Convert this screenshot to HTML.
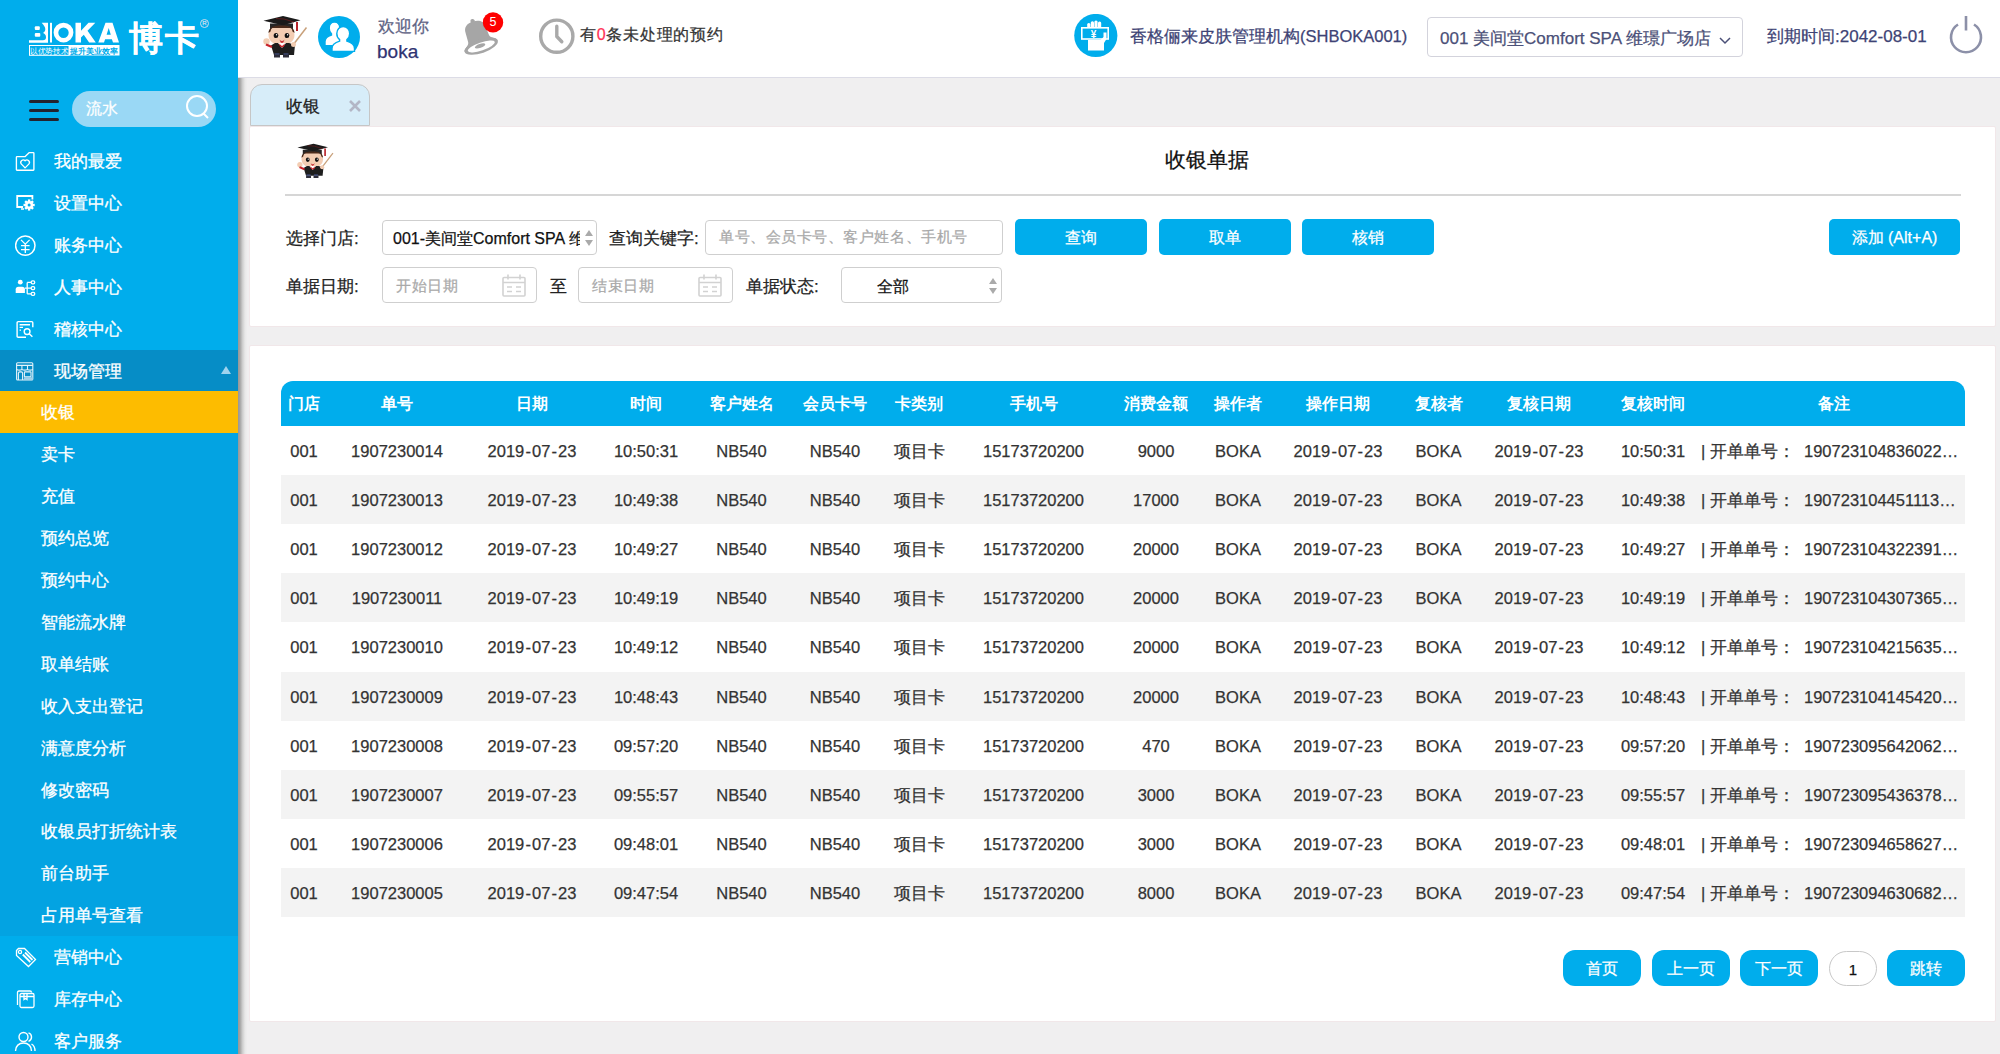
<!DOCTYPE html>
<html><head><meta charset="utf-8">
<style>
*{margin:0;padding:0;box-sizing:border-box}
html,body{width:2000px;height:1054px;overflow:hidden;background:#f0eff0;font-family:"Liberation Sans",sans-serif;color:#222;-webkit-text-stroke-width:.25px}
.abs{position:absolute}
#side{position:absolute;left:0;top:0;width:238px;height:1054px;background:#00adec}
#sideshadow{position:absolute;left:238px;top:78px;width:9px;height:976px;background:linear-gradient(to right,#979797 0px,#a4a4a4 2px,#cdcdcd 4.5px,#e8e8e8 7px,#efeeef 9px)}
#hdr{position:absolute;left:238px;top:0;width:1762px;height:78px;background:#fff;border-bottom:1px solid #dcdce6}
.mi{position:absolute;left:0;width:238px;height:42px;color:#fff;font-size:17px;line-height:44px;-webkit-text-stroke:.3px #fff}
.mi .t{position:absolute;left:54px;top:0}
.sub .t{left:41px}
.mi svg{position:absolute;left:15px;top:11px}
.panel{position:absolute;background:#fff;border:1px solid #f1e7e9;border-radius:2px}
.lbl{position:absolute;font-size:17px;color:#222;line-height:24px}
.inp{position:absolute;border:1px solid #cfcfcf;border-radius:4px;background:#fff;font-size:15px;line-height:34px}
.btn{position:absolute;background:#00adec;color:#fff;border-radius:5px;font-size:16px;text-align:center;line-height:38.5px;height:36px}
table{border-collapse:collapse;position:absolute;left:281px;top:381px;width:1684px;table-layout:fixed}
th{background:#00adec;color:#fff;font-weight:bold;font-size:15px;height:45px;text-align:center;white-space:nowrap}
td{font-size:16px;height:49px;text-align:center;white-space:nowrap;color:#222}
tr:nth-child(even) td{background:#f3f3f3}
.pbtn{position:absolute;top:950px;height:36px;background:#00adec;color:#fff;border-radius:12px;font-size:16px;text-align:center;line-height:38px;width:78px}
.th{-webkit-text-stroke-width:0;position:absolute;top:381px;width:120px;height:45px;line-height:45px;text-align:center;color:#fff;font-weight:bold;font-size:15.8px;white-space:nowrap}
.td{position:absolute;width:140px;height:49px;line-height:51px;text-align:center;color:#333;font-size:16.5px;white-space:nowrap}
.tdl{height:49px;line-height:51px;color:#333;font-size:16.5px;white-space:nowrap}
.hy{padding:0 1.1px}
</style></head><body>
<svg width="0" height="0" style="position:absolute"><defs><symbol id="cartoon" viewBox="0 0 48 46">
<path d="M31 31L44.5 13.5" stroke="#c8a07a" stroke-width="1.5"/>
<path d="M8 9.5v6.5h23v-6.5z" fill="#262626"/>
<path d="M1.5 6.8L21 2l17.5 4.3L21 11.2z" fill="#1a1a1a"/>
<path d="M14 4.5l8 0.5l10 3" stroke="#6a1d1d" stroke-width="0.8" fill="none"/>
<path d="M35 8v9" stroke="#b8232a" stroke-width="2"/>
<path d="M6.5 21c0-6 5-9 13-9s13 3 13 9c0 6-5 10-13 10s-13-4-13-10z" fill="#f3cdb3"/>
<path d="M6.5 19c0-5 4-7.5 13-7.5s13 2.5 13 7.5l-2 -1.5l-1 -3.5l-20 0l-1 3.5z" fill="#4a2a1a"/>
<ellipse cx="14" cy="21.5" rx="2.3" ry="2.6" fill="#111"/><ellipse cx="25" cy="21.5" rx="2.3" ry="2.6" fill="#111"/>
<circle cx="14.6" cy="20.8" r="0.7" fill="#fff"/><circle cx="25.6" cy="20.8" r="0.7" fill="#fff"/>
<path d="M17.5 25.5q2.5 3 5 0q-1 3.5-2.5 3.5t-2.5-3.5z" fill="#c8323a"/>
<path d="M9 31.5l4-2.5h14l6 2l-1 10h-20z" fill="#1e1e1e"/>
<path d="M16 29l4 5l4-5z" fill="#fff"/><path d="M17 29.5l3 2.5l3-2.5l-1 3l-2 1l-2-1z" fill="#c8232a"/>
<circle cx="4.5" cy="27.5" r="3.2" fill="#f3cdb3"/><path d="M4 30.5l6 2.5" stroke="#c8232a" stroke-width="2.4"/>
<circle cx="31.5" cy="30.5" r="2.5" fill="#f3cdb3"/>
<path d="M12 41h6v2.5h-6zM21 41h6v2.5h-6z" fill="#2d2d3a"/>
<path d="M12.5 40h5M21.5 40h5" stroke="#4a5a9a" stroke-width="1.2"/>
</symbol></defs></svg>
<div id="side">
<svg class="abs" style="left:25px;top:15px" width="100" height="45" viewBox="0 0 100 45">
<g fill="#fff">
<path d="M4 25.3h14c2 0 3-1 3-3c0-2.5-1.5-3.5-3-4.2c1.3-0.8 2.3-2 2.3-3.8c0-2-1-3.5-3.6-6.5h6.3v20h-19z"/>
<rect x="25" y="7.8" width="2" height="19.7"/>
<rect x="9.8" y="11.3" width="5" height="3.7" rx="1"/>
<rect x="9.8" y="18" width="5.5" height="3.7" rx="1"/>
<path fill-rule="evenodd" d="M38.5 7.7a9.9 9.9 0 1 1 0 19.8a9.9 9.9 0 1 1 0-19.8zM38.5 12.6a5.2 5.2 0 1 0 0 10.4a5.2 5.2 0 1 0 0-10.4z"/>
<path d="M50.5 7.8h5.5v8l7.5-8h6.8l-7.8 8l8.3 11.7h-6.7l-5.3-7.8l-2.8 2.8v5h-5.5z"/>
<path fill-rule="evenodd" d="M80.5 7.8h7l6.5 19.7h-6l-1.1-3.3h-6.8l-1.1 3.3h-5.7zM81.6 19.8h4.2l-2.1-6.8z"/>
</g>
<rect x="4.5" y="30.5" width="39.5" height="9.8" fill="none" stroke="#fff" stroke-width="1"/>
<rect x="44" y="30" width="50.5" height="10.5" fill="#fff"/>
<text x="24.2" y="38.8" font-size="8" fill="#fff" text-anchor="middle" textLength="38" lengthAdjust="spacingAndGlyphs">以优势技术</text>
<text x="69.2" y="38.8" font-size="8" fill="#00adec" text-anchor="middle" textLength="48" lengthAdjust="spacingAndGlyphs" font-weight="bold">提升美业效率</text>
</svg>
<div class="abs" style="left:129px;top:16px;color:#fff;font-weight:bold;font-size:34px;line-height:44px;letter-spacing:2px">博卡</div>
<div class="abs" style="left:200px;top:19px;width:9px;height:9px;border:1px solid #cde;border-radius:50%;font-size:6px;line-height:7px;text-align:center;color:#cde">R</div>
<div class="abs" style="left:29px;top:100px;width:30px;height:3px;background:#23232e;border-radius:2px"></div>
<div class="abs" style="left:29px;top:109px;width:30px;height:3px;background:#23232e;border-radius:2px"></div>
<div class="abs" style="left:29px;top:118px;width:30px;height:3px;background:#23232e;border-radius:2px"></div>
<div class="abs" style="left:72px;top:91px;width:144px;height:36px;border-radius:18px;background:#9ad8f5"></div>
<div class="abs" style="left:86px;top:99px;color:#fff;font-size:16px;line-height:20px">流水</div>
<svg class="abs" style="left:184px;top:94px" width="28" height="28" viewBox="0 0 28 28" fill="none" stroke="#fff" stroke-width="2"><circle cx="13" cy="12" r="10"/><path d="M19.5 19.5l4.5 4.5"/></svg>
<div class="mi" style="top:140.0px;"><svg width="22" height="22" viewBox="0 0 22 22" fill="none" stroke="#fff" stroke-width="1.35" stroke-linejoin="round"><path d="M1.4 6.2Q1.4 5.6 2 5.6H10.2L14.3 1.6H18.2Q18.9 1.6 18.9 2.3V18.6Q18.9 19.2 18.3 19.2H2Q1.4 19.2 1.4 18.6Z"/><path d="M10.1 16.9L6.2 12.9A2.5 2.5 0 0 1 10.1 9.8A2.5 2.5 0 0 1 14 12.9Z"/></svg><span class="t">我的最爱</span></div>
<div class="mi" style="top:181.9px;"><svg width="22" height="22" viewBox="0 0 22 22"><path d="M8 14H2.2V3h15.2v3.6" fill="none" stroke="#fff" stroke-width="1.8"/><path d="M6 16h3" stroke="#fff" stroke-width="1.5"/><g fill="#fff"><circle cx="14.1" cy="12" r="4"/><rect x="12.9" y="6.4" width="2.4" height="3" transform="rotate(0 14.1 12)"/><rect x="12.9" y="6.4" width="2.4" height="3" transform="rotate(45 14.1 12)"/><rect x="12.9" y="6.4" width="2.4" height="3" transform="rotate(90 14.1 12)"/><rect x="12.9" y="6.4" width="2.4" height="3" transform="rotate(135 14.1 12)"/><rect x="12.9" y="6.4" width="2.4" height="3" transform="rotate(180 14.1 12)"/><rect x="12.9" y="6.4" width="2.4" height="3" transform="rotate(225 14.1 12)"/><rect x="12.9" y="6.4" width="2.4" height="3" transform="rotate(270 14.1 12)"/><rect x="12.9" y="6.4" width="2.4" height="3" transform="rotate(315 14.1 12)"/></g><circle cx="14.1" cy="12" r="1.5" fill="#00adec"/></svg><span class="t">设置中心</span></div>
<div class="mi" style="top:223.8px;"><svg width="24" height="24" viewBox="0 0 24 24" fill="none" stroke="#fff" stroke-width="1.5"><circle cx="10.3" cy="10.6" r="9.7"/><path d="M6 4.9L10.3 9.2L14.6 4.9M10.3 9.2V17.9M6 10.7H14.6M6 14.7H14.6" stroke-width="1.3"/></svg><span class="t">账务中心</span></div>
<div class="mi" style="top:265.7px;"><svg width="22" height="22" viewBox="0 0 22 22" fill="none" stroke="#fff" stroke-width="1.3"><circle cx="5.3" cy="5.2" r="2.4" fill="#fff" stroke="none"/><path d="M0.7 16.1V12.2Q0.7 9.7 3.5 9.7H7.1Q9.9 9.7 9.9 12.2V16.1Z" fill="#fff" stroke="none"/><path d="M9.9 11.1H12.2M12.2 5.4V16.8M12.2 5.4H16.2M12.2 11.1H16.2M12.2 16.8H16.2"/><rect x="16.2" y="3.9" width="3.5" height="3" rx="1.3"/><rect x="16.2" y="9.6" width="3.5" height="3" rx="1.3"/><rect x="16.2" y="15.3" width="3.5" height="3" rx="1.3"/></svg><span class="t">人事中心</span></div>
<div class="mi" style="top:307.6px;"><svg width="22" height="22" viewBox="0 0 22 22" fill="none" stroke="#fff" stroke-width="1.4"><path d="M11 18.3H3.2Q2.1 18.3 2.1 17.2V3.7Q2.1 2.6 3.2 2.6H16.7Q17.8 2.6 17.8 3.7V8.3"/><path d="M4.6 5.8H15M4.6 8.4H8M4.6 11.1H6"/><circle cx="12.1" cy="12.6" r="2.9"/><path d="M14.2 14.7L17.4 17.7"/></svg><span class="t">稽核中心</span></div>
<div class="mi" style="top:349.5px;background:#068dc6;"><svg width="22" height="22" viewBox="0 0 22 22" fill="none" stroke="#e6f3fa" stroke-width="1.1"><rect x="1.6" y="1.8" width="16.2" height="17.2" rx="1"/><path d="M1.6 4.4H17.8M6.9 4.4V8.4M12.5 4.4V8.4M1.6 8.4Q4.2 9.8 6.9 8.4Q9.7 9.8 12.5 8.4Q15.2 9.8 17.8 8.4"/><path d="M3.4 19V12.2Q3.4 10.9 4.8 10.9H6.2Q7.6 10.9 7.6 12.2V19"/><rect x="9.4" y="10.9" width="6.6" height="5" rx="0.6"/><rect x="9" y="16.2" width="8.8" height="2.8" fill="#9fd0e8" stroke="none"/></svg><span class="t">现场管理</span><svg style="position:absolute;left:220px;top:15px" width="12" height="10" viewBox="0 0 12 10"><path d="M6 1L11 9H1z" fill="#9fd3ee"/></svg></div>
<div class="mi sub" style="top:391.4px;background:#fdbc00;"><span class="t">收银</span></div>
<div class="mi sub" style="top:433.3px;background:#03a3e2;"><span class="t">卖卡</span></div>
<div class="mi sub" style="top:475.2px;background:#03a3e2;"><span class="t">充值</span></div>
<div class="mi sub" style="top:517.1px;background:#03a3e2;"><span class="t">预约总览</span></div>
<div class="mi sub" style="top:559.0px;background:#03a3e2;"><span class="t">预约中心</span></div>
<div class="mi sub" style="top:600.9px;background:#03a3e2;"><span class="t">智能流水牌</span></div>
<div class="mi sub" style="top:642.8px;background:#03a3e2;"><span class="t">取单结账</span></div>
<div class="mi sub" style="top:684.7px;background:#03a3e2;"><span class="t">收入支出登记</span></div>
<div class="mi sub" style="top:726.6px;background:#03a3e2;"><span class="t">满意度分析</span></div>
<div class="mi sub" style="top:768.5px;background:#03a3e2;"><span class="t">修改密码</span></div>
<div class="mi sub" style="top:810.4px;background:#03a3e2;"><span class="t">收银员打折统计表</span></div>
<div class="mi sub" style="top:852.3px;background:#03a3e2;"><span class="t">前台助手</span></div>
<div class="mi sub" style="top:894.2px;background:#03a3e2;"><span class="t">占用单号查看</span></div>
<div class="mi" style="top:936.1px;"><svg style="left:13.5px;top:9.5px" width="24" height="24" viewBox="0 0 24 24" fill="none" stroke="#fff" stroke-width="1.3"><path d="M2.5 4.5l2-2h6l11 11l-7 7l-12-11z"/><circle cx="6" cy="6" r="1.6"/><path d="M8.8 8.5l7.5 7.5M11 6.5l7.5 7.5" stroke-width="1.8"/></svg><span class="t">营销中心</span></div>
<div class="mi" style="top:978.0px;"><svg style="left:13.5px;top:10px" width="24" height="24" viewBox="0 0 24 24" fill="none" stroke="#fff" stroke-width="1.3"><path d="M3.5 17V4.5q0-1.5 1.5-1.5h11q1.5 0 1.5 1.5"/><rect x="6" y="5.5" width="14" height="14" rx="1.5"/><path d="M6 8.5h14M10 5.5v6l1.5-1l1.5 1v-6"/></svg><span class="t">库存中心</span></div>
<div class="mi" style="top:1019.9px;"><svg style="left:14px;top:10px" width="24" height="24" viewBox="0 0 24 24" fill="none" stroke="#fff" stroke-width="1.4"><circle cx="9.5" cy="7" r="4.5"/><path d="M1.5 21c0-5 3.5-8 8-8s8 3 8 8"/><path d="M14.5 2.8a4.5 4.5 0 0 1 0 8.5M17.5 14c2 1.2 3.5 3.5 3.5 7"/></svg><span class="t">客户服务</span></div>
</div>
<div id="hdr"></div>
<div class="abs" style="left:262px;top:14px"><svg width="48" height="46" viewBox="0 0 48 46"><use href="#cartoon"/></svg></div>
<svg class="abs" style="left:318px;top:16px" width="42" height="42" viewBox="0 0 42 42"><circle cx="21" cy="21" r="21" fill="#00adec"/>
<g fill="#fff" stroke="#00adec" stroke-width="1.4">
<path d="M16.5 6c-3 0-5.3 2.6-5.3 6.2c0 2.3 0.9 4.3 2.3 5.5v1.3c-4 1.2-6.5 3.3-6.5 6.5v4.3h19v-4.3c0-3.2-2.5-5.3-6.5-6.5v-1.3c1.4-1.2 2.3-3.2 2.3-5.5c0-3.6-2.3-6.2-5.3-6.2z"/>
<path d="M25.2 10.5c-3.6 0-6.4 3-6.4 7c0 2.6 1.1 4.8 2.8 6.1v1.6c-4.8 1.4-7.6 3.6-7.6 7.2v3h22.5v-3c0-3.6-2.8-5.8-7.6-7.2v-1.6c1.7-1.3 2.8-3.5 2.8-6.1c0-4-2.8-7-6.5-7z"/>
</g></svg>
<div class="abs" style="left:378px;top:16px;font-size:17px;line-height:22px;color:#5f6485">欢迎你</div>
<div class="abs" style="left:377px;top:40px;font-size:19px;line-height:24px;color:#2f3372">boka</div>
<svg class="abs" style="left:455px;top:8px" width="60" height="54" viewBox="0 0 60 54">
<g transform="translate(26.2 38.2) rotate(-19)" fill="#a6a6a6"><circle cx="0" cy="-26.5" r="2.2"/>
<path d="M-10.5 -17C-10.5 -24 -5.5 -26 0 -26C5.5 -26 10.5 -24 10.5 -17L11 -8C11.5 -4 17.5 -3 17.5 0L-17.5 0C-17.5 -3 -11.5 -4 -11 -8Z"/>
<ellipse cx="0" cy="0" rx="17.5" ry="6.8"/><ellipse cx="0" cy="0.3" rx="14.2" ry="4" fill="#fff"/><ellipse cx="-1" cy="-0.6" rx="5.5" ry="2"/></g>
<circle cx="38" cy="14.4" r="10.2" fill="#fe0000"/><text x="38" y="17.9" font-size="12.5" fill="#fff" text-anchor="middle" font-family="Liberation Sans">5</text></svg>
<svg class="abs" style="left:538px;top:18px" width="38" height="38" viewBox="0 0 38 38"><circle cx="18.8" cy="18.2" r="16.1" fill="none" stroke="#a9a9a9" stroke-width="3.4"/><path d="M18.8 8.3v10.2l5 5.2" fill="none" stroke="#a9a9a9" stroke-width="3.4" stroke-linecap="round" stroke-linejoin="round"/></svg>
<div class="abs" style="left:580px;top:25px;font-size:16px;letter-spacing:.75px;line-height:20px;color:#333">有<span style="color:#ff3355">0</span>条未处理的预约</div>
<svg class="abs" style="left:1074px;top:14px" width="44" height="44" viewBox="0 0 44 44"><circle cx="21.8" cy="21.5" r="21.6" fill="#00adec"/>
<g fill="#fff"><rect x="13.2" y="9" width="3.2" height="6" rx="1.5"/><rect x="16.8" y="7.2" width="3.2" height="8" rx="1.5"/><rect x="20.4" y="6.6" width="3.2" height="8" rx="1.5"/><rect x="24" y="7.6" width="3.2" height="8" rx="1.5"/></g>
<rect x="7.8" y="13.8" width="26.4" height="11.2" fill="#00adec" stroke="#fff" stroke-width="1.6"/>
<text x="19.5" y="23.5" font-size="10" fill="#fff" text-anchor="middle" font-weight="bold" font-family="Liberation Sans">¥</text>
<path d="M14 26h12.5l3-3v-4.5h3v6.5l-2.5 4v7.5h-16z" fill="#fff"/></svg>
<div class="abs" style="left:1130px;top:25px;font-size:16.5px;line-height:22px;color:#3e4375;white-space:nowrap">香格俪来皮肤管理机构(SHBOKA001)</div>
<div class="abs" style="left:1427px;top:17px;width:316px;height:40px;border:1px solid #d3d3dc;border-radius:4px;background:#fff"></div>
<div class="abs" style="left:1440px;top:28px;font-size:17px;line-height:22px;color:#4b5078;white-space:nowrap">001 美间堂Comfort SPA 维璟广场店</div>
<svg class="abs" style="left:1718px;top:35px" width="14" height="10" viewBox="0 0 14 10"><path d="M2 3l5 5l5-5" fill="none" stroke="#4b5078" stroke-width="1.5"/></svg>
<div class="abs" style="left:1767px;top:26px;font-size:17px;line-height:22px;color:#3e4375;white-space:nowrap">到期时间:2042-08-01</div>
<svg class="abs" style="left:1946px;top:14px" width="40" height="40" viewBox="0 0 40 40"><path d="M12 10.5a15 15 0 1 0 16 0" fill="none" stroke="#8c90a8" stroke-width="2.6"/><path d="M20 2v14.5" stroke="#8c90a8" stroke-width="2.6"/></svg>

<div id="sideshadow"></div>

<!-- tab -->
<div class="abs" style="left:250px;top:84px;width:120px;height:42px;background:#d7edf9;border:1px solid #c6c6c6;border-radius:12px 12px 0 0"></div>
<div class="abs" style="left:286px;top:95px;font-size:17px;line-height:24px;color:#222">收银</div>
<svg class="abs" style="left:348px;top:99px" width="14" height="14" viewBox="0 0 14 14"><path d="M2 2L12 12M12 2L2 12" stroke="#b3b6c6" stroke-width="2.6"/></svg>
<!-- panel 1 -->
<div class="panel" style="left:249px;top:126px;width:1747px;height:201px"></div>
<div class="abs" style="left:1165px;top:146px;font-size:21px;line-height:28px;color:#111">收银单据</div>
<div class="abs" style="left:285px;top:194px;width:1676px;height:2px;background:#d6d6d6"></div>

<!-- panel 2 -->
<div class="panel" style="left:249px;top:345px;width:1747px;height:677px"></div>

<div class="abs" style="left:296px;top:142px"><svg width="40" height="38" viewBox="0 0 48 46"><use href="#cartoon"/></svg></div>
<div class="lbl" style="left:286px;top:227px">选择门店:</div>
<div class="inp" style="left:382px;top:220px;width:215px;height:35px"></div>
<div class="abs" style="left:393px;top:229px;font-size:16px;line-height:20px;color:#111;white-space:nowrap;width:187px;overflow:hidden">001-美间堂Comfort SPA 维璟广场店</div>
<svg class="abs" style="left:584px;top:229px" width="10" height="18" viewBox="0 0 10 18"><path d="M5 1L9 7H1z" fill="#aaa"/><path d="M5 17L9 11H1z" fill="#aaa"/></svg>
<div class="lbl" style="left:609px;top:227px">查询关键字:</div>
<div class="inp" style="left:705px;top:220px;width:298px;height:35px"></div>
<div class="abs" style="left:719px;top:227px;font-size:15px;letter-spacing:.55px;line-height:20px;color:#a9a9a9;white-space:nowrap">单号、会员卡号、客户姓名、手机号</div>
<div class="btn" style="left:1015px;top:219px;width:132px">查询</div>
<div class="btn" style="left:1159px;top:219px;width:132px">取单</div>
<div class="btn" style="left:1302px;top:219px;width:132px">核销</div>
<div class="btn" style="left:1829px;top:219px;width:131px">添加 (Alt+A)</div>
<div class="lbl" style="left:286px;top:275px">单据日期:</div>
<div class="inp" style="left:382px;top:267px;width:155px;height:36px"></div>
<div class="abs" style="left:396px;top:276px;font-size:15px;letter-spacing:.55px;line-height:20px;color:#a9a9a9">开始日期</div>
<svg class="abs" style="left:502px;top:274px" width="24" height="23" viewBox="0 0 24 23" fill="none" stroke="#d2d2d2" stroke-width="1.6"><rect x="1" y="3.5" width="22" height="18.5" rx="1"/><path d="M1 8.5h22M6 0.5v5M18 0.5v5M5 13h5M14 13h5M5 17.5h5M14 17.5h5"/></svg>
<div class="lbl" style="left:550px;top:275px">至</div>
<div class="inp" style="left:578px;top:267px;width:155px;height:36px"></div>
<div class="abs" style="left:592px;top:276px;font-size:15px;letter-spacing:.55px;line-height:20px;color:#a9a9a9">结束日期</div>
<svg class="abs" style="left:698px;top:274px" width="24" height="23" viewBox="0 0 24 23" fill="none" stroke="#d2d2d2" stroke-width="1.6"><rect x="1" y="3.5" width="22" height="18.5" rx="1"/><path d="M1 8.5h22M6 0.5v5M18 0.5v5M5 13h5M14 13h5M5 17.5h5M14 17.5h5"/></svg>
<div class="lbl" style="left:746px;top:275px">单据状态:</div>
<div class="inp" style="left:841px;top:267px;width:161px;height:36px"></div>
<div class="abs" style="left:877px;top:277px;font-size:16px;line-height:20px;color:#111">全部</div>
<svg class="abs" style="left:988px;top:277px" width="10" height="18" viewBox="0 0 10 18"><path d="M5 1L9 7H1z" fill="#aaa"/><path d="M5 17L9 11H1z" fill="#aaa"/></svg>
<div class="abs" style="left:281px;top:381px;width:1684px;height:45px;background:#00adec;border-radius:12px 12px 0 0"></div>
<div class="th" style="left:244px">门店</div>
<div class="th" style="left:337px">单号</div>
<div class="th" style="left:472px">日期</div>
<div class="th" style="left:586px">时间</div>
<div class="th" style="left:681.5px">客户姓名</div>
<div class="th" style="left:775px">会员卡号</div>
<div class="th" style="left:859px">卡类别</div>
<div class="th" style="left:973.5px">手机号</div>
<div class="th" style="left:1096px">消费金额</div>
<div class="th" style="left:1178px">操作者</div>
<div class="th" style="left:1278px">操作日期</div>
<div class="th" style="left:1378.5px">复核者</div>
<div class="th" style="left:1479px">复核日期</div>
<div class="th" style="left:1593px">复核时间</div>
<div class="th" style="left:1773.5px">备注</div>
<div class="td" style="left:234px;top:426.0px">001</div>
<div class="td" style="left:327px;top:426.0px">1907230014</div>
<div class="td" style="left:462px;top:426.0px">2019<span class="hy">-</span>07<span class="hy">-</span>23</div>
<div class="td" style="left:576px;top:426.0px">10:50:31</div>
<div class="td" style="left:671.5px;top:426.0px">NB540</div>
<div class="td" style="left:765px;top:426.0px">NB540</div>
<div class="td" style="left:849px;top:426.0px">项目卡</div>
<div class="td" style="left:963.5px;top:426.0px">15173720200</div>
<div class="td" style="left:1086px;top:426.0px">9000</div>
<div class="td" style="left:1168px;top:426.0px">BOKA</div>
<div class="td" style="left:1268px;top:426.0px">2019<span class="hy">-</span>07<span class="hy">-</span>23</div>
<div class="td" style="left:1368.5px;top:426.0px">BOKA</div>
<div class="td" style="left:1469px;top:426.0px">2019<span class="hy">-</span>07<span class="hy">-</span>23</div>
<div class="td" style="left:1583px;top:426.0px">10:50:31</div>
<div class="abs tdl" style="left:1701px;top:426.0px">| 开单单号：</div>
<div class="abs tdl" style="left:1804px;top:426.0px">190723104836022…</div>
<div class="abs" style="left:281px;top:475.1px;width:1684px;height:49.1px;background:#f3f3f3"></div>
<div class="td" style="left:234px;top:475.1px">001</div>
<div class="td" style="left:327px;top:475.1px">1907230013</div>
<div class="td" style="left:462px;top:475.1px">2019<span class="hy">-</span>07<span class="hy">-</span>23</div>
<div class="td" style="left:576px;top:475.1px">10:49:38</div>
<div class="td" style="left:671.5px;top:475.1px">NB540</div>
<div class="td" style="left:765px;top:475.1px">NB540</div>
<div class="td" style="left:849px;top:475.1px">项目卡</div>
<div class="td" style="left:963.5px;top:475.1px">15173720200</div>
<div class="td" style="left:1086px;top:475.1px">17000</div>
<div class="td" style="left:1168px;top:475.1px">BOKA</div>
<div class="td" style="left:1268px;top:475.1px">2019<span class="hy">-</span>07<span class="hy">-</span>23</div>
<div class="td" style="left:1368.5px;top:475.1px">BOKA</div>
<div class="td" style="left:1469px;top:475.1px">2019<span class="hy">-</span>07<span class="hy">-</span>23</div>
<div class="td" style="left:1583px;top:475.1px">10:49:38</div>
<div class="abs tdl" style="left:1701px;top:475.1px">| 开单单号：</div>
<div class="abs tdl" style="left:1804px;top:475.1px">190723104451113…</div>
<div class="td" style="left:234px;top:524.2px">001</div>
<div class="td" style="left:327px;top:524.2px">1907230012</div>
<div class="td" style="left:462px;top:524.2px">2019<span class="hy">-</span>07<span class="hy">-</span>23</div>
<div class="td" style="left:576px;top:524.2px">10:49:27</div>
<div class="td" style="left:671.5px;top:524.2px">NB540</div>
<div class="td" style="left:765px;top:524.2px">NB540</div>
<div class="td" style="left:849px;top:524.2px">项目卡</div>
<div class="td" style="left:963.5px;top:524.2px">15173720200</div>
<div class="td" style="left:1086px;top:524.2px">20000</div>
<div class="td" style="left:1168px;top:524.2px">BOKA</div>
<div class="td" style="left:1268px;top:524.2px">2019<span class="hy">-</span>07<span class="hy">-</span>23</div>
<div class="td" style="left:1368.5px;top:524.2px">BOKA</div>
<div class="td" style="left:1469px;top:524.2px">2019<span class="hy">-</span>07<span class="hy">-</span>23</div>
<div class="td" style="left:1583px;top:524.2px">10:49:27</div>
<div class="abs tdl" style="left:1701px;top:524.2px">| 开单单号：</div>
<div class="abs tdl" style="left:1804px;top:524.2px">190723104322391…</div>
<div class="abs" style="left:281px;top:573.3px;width:1684px;height:49.1px;background:#f3f3f3"></div>
<div class="td" style="left:234px;top:573.3px">001</div>
<div class="td" style="left:327px;top:573.3px">1907230011</div>
<div class="td" style="left:462px;top:573.3px">2019<span class="hy">-</span>07<span class="hy">-</span>23</div>
<div class="td" style="left:576px;top:573.3px">10:49:19</div>
<div class="td" style="left:671.5px;top:573.3px">NB540</div>
<div class="td" style="left:765px;top:573.3px">NB540</div>
<div class="td" style="left:849px;top:573.3px">项目卡</div>
<div class="td" style="left:963.5px;top:573.3px">15173720200</div>
<div class="td" style="left:1086px;top:573.3px">20000</div>
<div class="td" style="left:1168px;top:573.3px">BOKA</div>
<div class="td" style="left:1268px;top:573.3px">2019<span class="hy">-</span>07<span class="hy">-</span>23</div>
<div class="td" style="left:1368.5px;top:573.3px">BOKA</div>
<div class="td" style="left:1469px;top:573.3px">2019<span class="hy">-</span>07<span class="hy">-</span>23</div>
<div class="td" style="left:1583px;top:573.3px">10:49:19</div>
<div class="abs tdl" style="left:1701px;top:573.3px">| 开单单号：</div>
<div class="abs tdl" style="left:1804px;top:573.3px">190723104307365…</div>
<div class="td" style="left:234px;top:622.4px">001</div>
<div class="td" style="left:327px;top:622.4px">1907230010</div>
<div class="td" style="left:462px;top:622.4px">2019<span class="hy">-</span>07<span class="hy">-</span>23</div>
<div class="td" style="left:576px;top:622.4px">10:49:12</div>
<div class="td" style="left:671.5px;top:622.4px">NB540</div>
<div class="td" style="left:765px;top:622.4px">NB540</div>
<div class="td" style="left:849px;top:622.4px">项目卡</div>
<div class="td" style="left:963.5px;top:622.4px">15173720200</div>
<div class="td" style="left:1086px;top:622.4px">20000</div>
<div class="td" style="left:1168px;top:622.4px">BOKA</div>
<div class="td" style="left:1268px;top:622.4px">2019<span class="hy">-</span>07<span class="hy">-</span>23</div>
<div class="td" style="left:1368.5px;top:622.4px">BOKA</div>
<div class="td" style="left:1469px;top:622.4px">2019<span class="hy">-</span>07<span class="hy">-</span>23</div>
<div class="td" style="left:1583px;top:622.4px">10:49:12</div>
<div class="abs tdl" style="left:1701px;top:622.4px">| 开单单号：</div>
<div class="abs tdl" style="left:1804px;top:622.4px">190723104215635…</div>
<div class="abs" style="left:281px;top:671.5px;width:1684px;height:49.1px;background:#f3f3f3"></div>
<div class="td" style="left:234px;top:671.5px">001</div>
<div class="td" style="left:327px;top:671.5px">1907230009</div>
<div class="td" style="left:462px;top:671.5px">2019<span class="hy">-</span>07<span class="hy">-</span>23</div>
<div class="td" style="left:576px;top:671.5px">10:48:43</div>
<div class="td" style="left:671.5px;top:671.5px">NB540</div>
<div class="td" style="left:765px;top:671.5px">NB540</div>
<div class="td" style="left:849px;top:671.5px">项目卡</div>
<div class="td" style="left:963.5px;top:671.5px">15173720200</div>
<div class="td" style="left:1086px;top:671.5px">20000</div>
<div class="td" style="left:1168px;top:671.5px">BOKA</div>
<div class="td" style="left:1268px;top:671.5px">2019<span class="hy">-</span>07<span class="hy">-</span>23</div>
<div class="td" style="left:1368.5px;top:671.5px">BOKA</div>
<div class="td" style="left:1469px;top:671.5px">2019<span class="hy">-</span>07<span class="hy">-</span>23</div>
<div class="td" style="left:1583px;top:671.5px">10:48:43</div>
<div class="abs tdl" style="left:1701px;top:671.5px">| 开单单号：</div>
<div class="abs tdl" style="left:1804px;top:671.5px">190723104145420…</div>
<div class="td" style="left:234px;top:720.6px">001</div>
<div class="td" style="left:327px;top:720.6px">1907230008</div>
<div class="td" style="left:462px;top:720.6px">2019<span class="hy">-</span>07<span class="hy">-</span>23</div>
<div class="td" style="left:576px;top:720.6px">09:57:20</div>
<div class="td" style="left:671.5px;top:720.6px">NB540</div>
<div class="td" style="left:765px;top:720.6px">NB540</div>
<div class="td" style="left:849px;top:720.6px">项目卡</div>
<div class="td" style="left:963.5px;top:720.6px">15173720200</div>
<div class="td" style="left:1086px;top:720.6px">470</div>
<div class="td" style="left:1168px;top:720.6px">BOKA</div>
<div class="td" style="left:1268px;top:720.6px">2019<span class="hy">-</span>07<span class="hy">-</span>23</div>
<div class="td" style="left:1368.5px;top:720.6px">BOKA</div>
<div class="td" style="left:1469px;top:720.6px">2019<span class="hy">-</span>07<span class="hy">-</span>23</div>
<div class="td" style="left:1583px;top:720.6px">09:57:20</div>
<div class="abs tdl" style="left:1701px;top:720.6px">| 开单单号：</div>
<div class="abs tdl" style="left:1804px;top:720.6px">190723095642062…</div>
<div class="abs" style="left:281px;top:769.7px;width:1684px;height:49.1px;background:#f3f3f3"></div>
<div class="td" style="left:234px;top:769.7px">001</div>
<div class="td" style="left:327px;top:769.7px">1907230007</div>
<div class="td" style="left:462px;top:769.7px">2019<span class="hy">-</span>07<span class="hy">-</span>23</div>
<div class="td" style="left:576px;top:769.7px">09:55:57</div>
<div class="td" style="left:671.5px;top:769.7px">NB540</div>
<div class="td" style="left:765px;top:769.7px">NB540</div>
<div class="td" style="left:849px;top:769.7px">项目卡</div>
<div class="td" style="left:963.5px;top:769.7px">15173720200</div>
<div class="td" style="left:1086px;top:769.7px">3000</div>
<div class="td" style="left:1168px;top:769.7px">BOKA</div>
<div class="td" style="left:1268px;top:769.7px">2019<span class="hy">-</span>07<span class="hy">-</span>23</div>
<div class="td" style="left:1368.5px;top:769.7px">BOKA</div>
<div class="td" style="left:1469px;top:769.7px">2019<span class="hy">-</span>07<span class="hy">-</span>23</div>
<div class="td" style="left:1583px;top:769.7px">09:55:57</div>
<div class="abs tdl" style="left:1701px;top:769.7px">| 开单单号：</div>
<div class="abs tdl" style="left:1804px;top:769.7px">190723095436378…</div>
<div class="td" style="left:234px;top:818.8px">001</div>
<div class="td" style="left:327px;top:818.8px">1907230006</div>
<div class="td" style="left:462px;top:818.8px">2019<span class="hy">-</span>07<span class="hy">-</span>23</div>
<div class="td" style="left:576px;top:818.8px">09:48:01</div>
<div class="td" style="left:671.5px;top:818.8px">NB540</div>
<div class="td" style="left:765px;top:818.8px">NB540</div>
<div class="td" style="left:849px;top:818.8px">项目卡</div>
<div class="td" style="left:963.5px;top:818.8px">15173720200</div>
<div class="td" style="left:1086px;top:818.8px">3000</div>
<div class="td" style="left:1168px;top:818.8px">BOKA</div>
<div class="td" style="left:1268px;top:818.8px">2019<span class="hy">-</span>07<span class="hy">-</span>23</div>
<div class="td" style="left:1368.5px;top:818.8px">BOKA</div>
<div class="td" style="left:1469px;top:818.8px">2019<span class="hy">-</span>07<span class="hy">-</span>23</div>
<div class="td" style="left:1583px;top:818.8px">09:48:01</div>
<div class="abs tdl" style="left:1701px;top:818.8px">| 开单单号：</div>
<div class="abs tdl" style="left:1804px;top:818.8px">190723094658627…</div>
<div class="abs" style="left:281px;top:867.9px;width:1684px;height:49.1px;background:#f3f3f3"></div>
<div class="td" style="left:234px;top:867.9px">001</div>
<div class="td" style="left:327px;top:867.9px">1907230005</div>
<div class="td" style="left:462px;top:867.9px">2019<span class="hy">-</span>07<span class="hy">-</span>23</div>
<div class="td" style="left:576px;top:867.9px">09:47:54</div>
<div class="td" style="left:671.5px;top:867.9px">NB540</div>
<div class="td" style="left:765px;top:867.9px">NB540</div>
<div class="td" style="left:849px;top:867.9px">项目卡</div>
<div class="td" style="left:963.5px;top:867.9px">15173720200</div>
<div class="td" style="left:1086px;top:867.9px">8000</div>
<div class="td" style="left:1168px;top:867.9px">BOKA</div>
<div class="td" style="left:1268px;top:867.9px">2019<span class="hy">-</span>07<span class="hy">-</span>23</div>
<div class="td" style="left:1368.5px;top:867.9px">BOKA</div>
<div class="td" style="left:1469px;top:867.9px">2019<span class="hy">-</span>07<span class="hy">-</span>23</div>
<div class="td" style="left:1583px;top:867.9px">09:47:54</div>
<div class="abs tdl" style="left:1701px;top:867.9px">| 开单单号：</div>
<div class="abs tdl" style="left:1804px;top:867.9px">190723094630682…</div>
<div class="pbtn" style="left:1563px">首页</div>
<div class="pbtn" style="left:1652px">上一页</div>
<div class="pbtn" style="left:1740px">下一页</div>
<div class="abs" style="left:1829px;top:951px;width:48px;height:35px;border:1px solid #c8c8c8;border-radius:18px;background:#fff;text-align:center;font-size:15px;line-height:36px;color:#111">1</div>
<div class="pbtn" style="left:1887px">跳转</div>


</body></html>
